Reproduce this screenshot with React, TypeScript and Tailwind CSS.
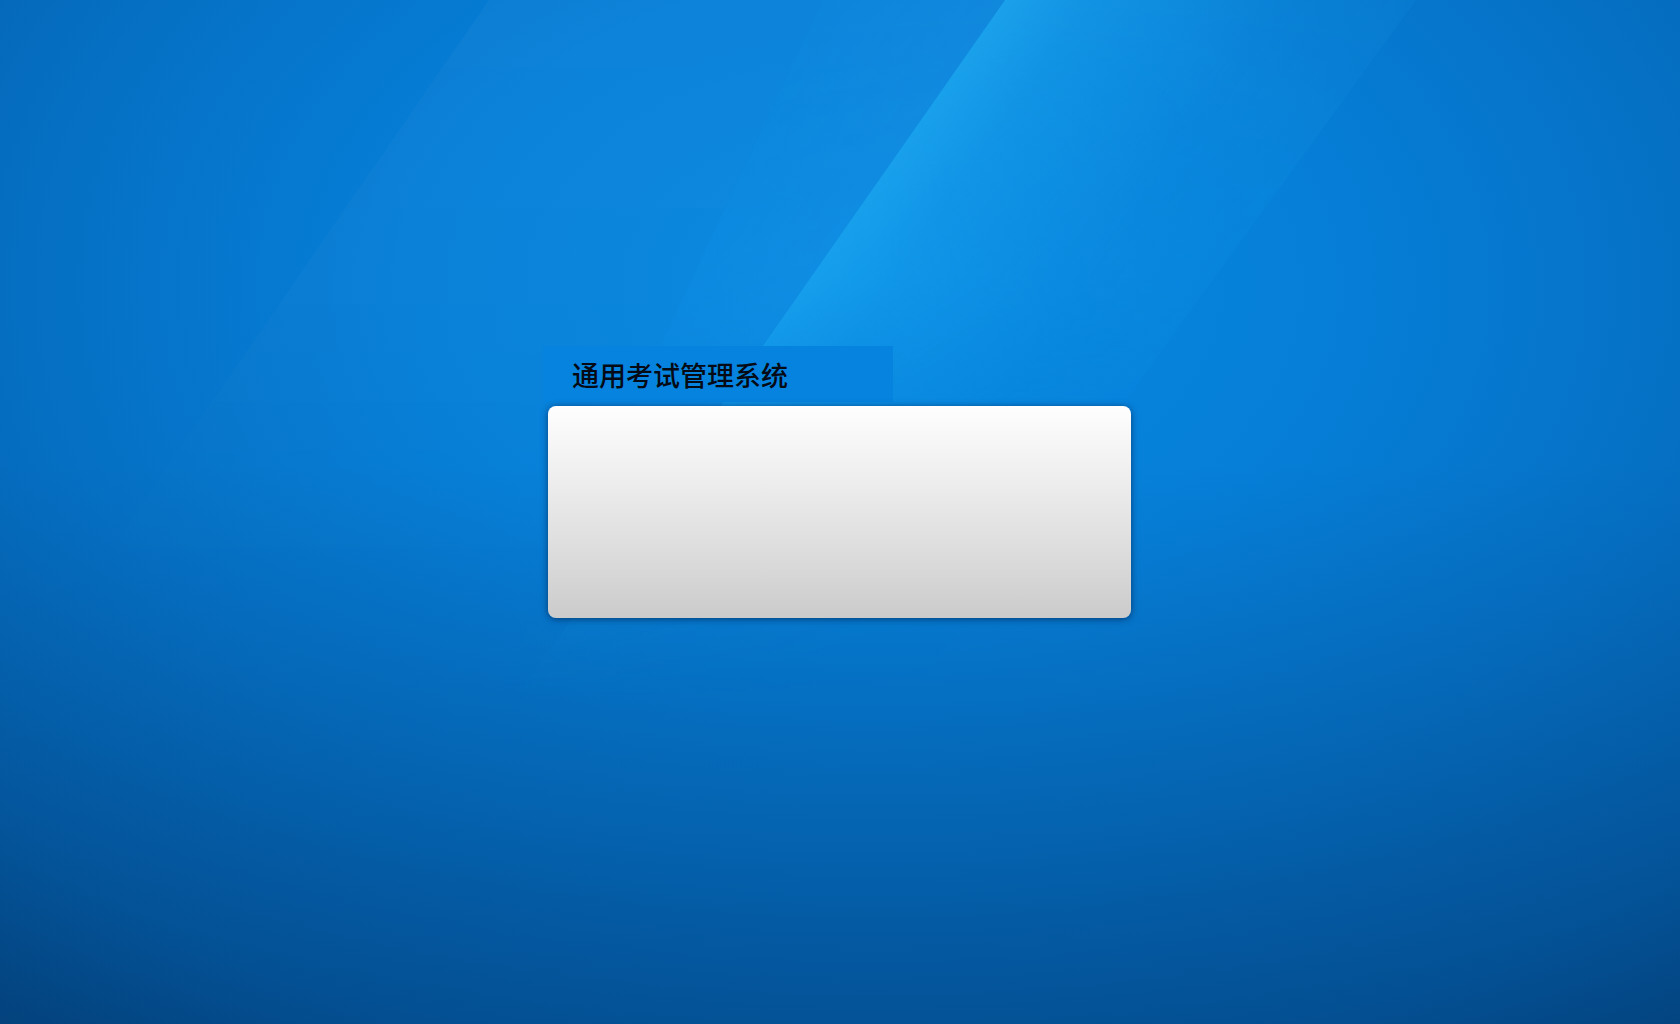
import React from "react";

const Streaks = () => (
  <svg
    className="absolute inset-0 h-full w-full"
    viewBox="0 0 1680 1024"
    preserveAspectRatio="none"
  >
    <defs>
      <linearGradient id="fadeDown" x1="0" y1="0" x2="0" y2="1">
        <stop offset="0" stopColor="#fff" stopOpacity="1" />
        <stop offset="0.4" stopColor="#fff" stopOpacity="0.75" />
        <stop offset="0.65" stopColor="#fff" stopOpacity="0.3" />
        <stop offset="1" stopColor="#fff" stopOpacity="0" />
      </linearGradient>
      <mask id="streakMask" maskUnits="userSpaceOnUse" x="0" y="0" width="1680" height="700">
        <rect x="0" y="0" width="1680" height="700" fill="url(#fadeDown)" />
      </mask>
      <linearGradient
        id="bright"
        gradientUnits="userSpaceOnUse"
        x1="880"
        y1="180"
        x2="1260"
        y2="440"
      >
        <stop offset="0" stopColor="#30c4ff" stopOpacity="0.5" />
        <stop offset="0.15" stopColor="#30c4ff" stopOpacity="0.3" />
        <stop offset="0.5" stopColor="#30c4ff" stopOpacity="0.1" />
        <stop offset="1" stopColor="#30c4ff" stopOpacity="0.02" />
      </linearGradient>
      <linearGradient
        id="mid"
        gradientUnits="userSpaceOnUse"
        x1="700"
        y1="150"
        x2="950"
        y2="320"
      >
        <stop offset="0" stopColor="#5ec8ff" stopOpacity="0.07" />
        <stop offset="1" stopColor="#5ec8ff" stopOpacity="0.16" />
      </linearGradient>
    </defs>
    <g mask="url(#streakMask)">
      <polygon points="489,0 823,0 494,700 6,700" fill="#ffffff" fillOpacity="0.03" />
      <polygon points="823,0 1005,0 515,700 494,700" fill="url(#mid)" />
      <polygon points="1005,0 1416,0 908,700 515,700" fill="url(#bright)" />
    </g>
  </svg>
);

export default function App() {
  return (
    <div className="relative h-[1024px] w-full overflow-hidden bg-[#0570c4] font-['Noto_Sans_CJK_SC','Noto_Sans',sans-serif]">
      <div className="absolute inset-0 bg-[radial-gradient(ellipse_90%_100%_at_52%_28%,#0789e2_0%,#067fd8_30%,#0570c4_55%,#045fab_78%,#034580_100%)]" />
      <div className="absolute inset-0 bg-[linear-gradient(to_bottom,rgba(0,0,0,0)_45%,rgba(2,30,70,0.25)_100%)]" />
      <Streaks />
      <div className="relative pl-[543px] pt-[346px]">
        <div className="flex h-[56px] w-[350px] items-center bg-[#0683de] pl-[29px]">
          <span className="text-[27px] font-medium leading-none text-[#050a14]">
            通用考试管理系统
          </span>
        </div>
        <div className="ml-[5px] mt-[4px] h-[212px] w-[583px] rounded-[8px] bg-[linear-gradient(to_bottom,#fefefe_0%,#f0f0f0_30%,#dcdcdc_70%,#cbcbcb_100%)] shadow-[0_1px_7px_rgba(0,20,60,0.6)]" />
      </div>
    </div>
  );
}
